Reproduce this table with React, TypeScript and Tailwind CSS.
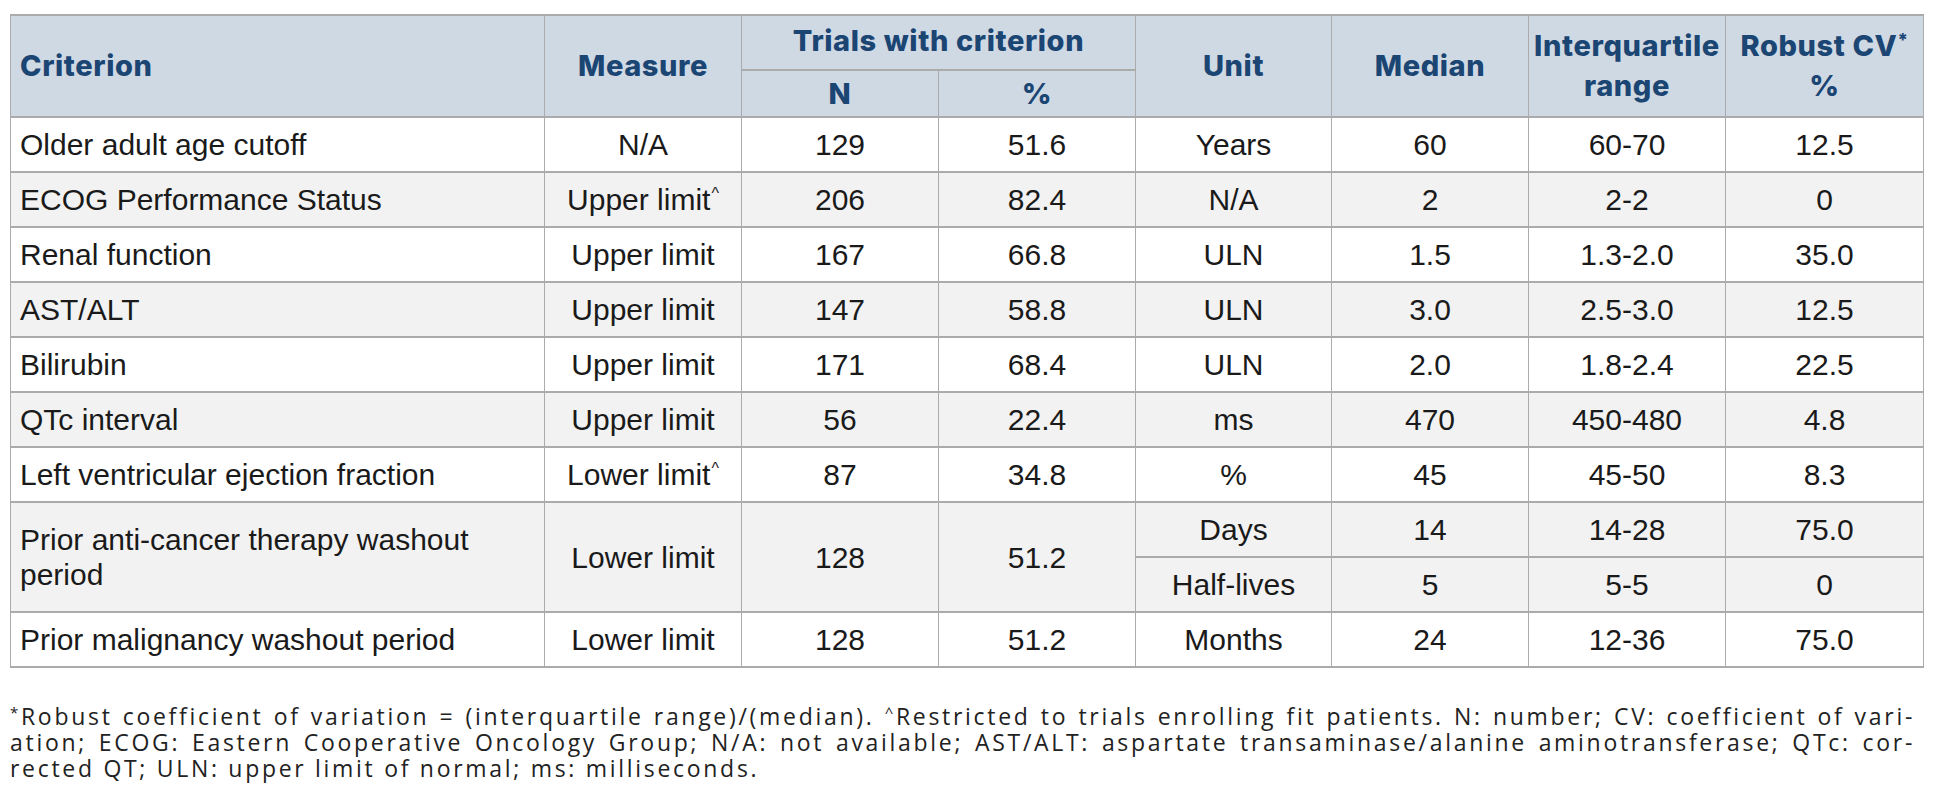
import React from "react";

const Caret = () => <sup className="text-[16px] relative -top-[11px] ml-[1px]">^</sup>;

const rows: { c: string; m: React.ReactNode; n: string; p: string; u: string; med: string; iqr: string; cv: string }[] = [
  { c: "Older adult age cutoff", m: "N/A", n: "129", p: "51.6", u: "Years", med: "60", iqr: "60-70", cv: "12.5" },
  { c: "ECOG Performance Status", m: <>Upper limit<Caret /></>, n: "206", p: "82.4", u: "N/A", med: "2", iqr: "2-2", cv: "0" },
  { c: "Renal function", m: "Upper limit", n: "167", p: "66.8", u: "ULN", med: "1.5", iqr: "1.3-2.0", cv: "35.0" },
  { c: "AST/ALT", m: "Upper limit", n: "147", p: "58.8", u: "ULN", med: "3.0", iqr: "2.5-3.0", cv: "12.5" },
  { c: "Bilirubin", m: "Upper limit", n: "171", p: "68.4", u: "ULN", med: "2.0", iqr: "1.8-2.4", cv: "22.5" },
  { c: "QTc interval", m: "Upper limit", n: "56", p: "22.4", u: "ms", med: "470", iqr: "450-480", cv: "4.8" },
  { c: "Left ventricular ejection fraction", m: <>Lower limit<Caret /></>, n: "87", p: "34.8", u: "%", med: "45", iqr: "45-50", cv: "8.3" },
];

const td = "border-x border-y-2 border-[#ababab] text-center align-middle p-0";
const th = "border-x border-y-2 border-[#ababab] text-center align-middle p-0 font-extrabold";

export default function App() {
  return (
    <div className="w-[1936px] h-[812px] bg-white overflow-hidden pt-[14px] pl-[10px]">
      <table
        className="table-fixed border-collapse w-[1913px] text-[30px] text-[#1a1a1a]"
        style={{ fontFamily: '"Liberation Sans", Arial, sans-serif' }}
      >
        <colgroup>
          <col className="w-[534px]" />
          <col className="w-[197px]" />
          <col className="w-[197px]" />
          <col className="w-[197px]" />
          <col className="w-[196px]" />
          <col className="w-[197px]" />
          <col className="w-[197px]" />
          <col className="w-[198px]" />
        </colgroup>
        <thead
          className="bg-[#cfd9e3] text-[#1b4573] text-[29px] leading-[40px] tracking-[0.6px]"
          style={{ fontFamily: 'Inter, "Liberation Sans", sans-serif' }}
        >
          <tr className="h-[55px]">
            <th rowSpan={2} className={th + " text-left pl-[9px]"}>Criterion</th>
            <th rowSpan={2} className={th}>Measure</th>
            <th colSpan={2} className={th + " pb-[4px]"}>Trials with criterion</th>
            <th rowSpan={2} className={th}>Unit</th>
            <th rowSpan={2} className={th}>Median</th>
            <th rowSpan={2} className={th + " whitespace-nowrap"}>Interquartile<br />range</th>
            <th rowSpan={2} className={th}>Robust CV<sup className="text-[18px] relative -top-[10px]">*</sup><br />%</th>
          </tr>
          <tr className="h-[47px]">
            <th className={th}>N</th>
            <th className={th}>%</th>
          </tr>
        </thead>
        <tbody>
          {rows.map((r, i) => (
            <tr key={i} className={"h-[55px] " + (i % 2 === 1 ? "bg-[#f2f2f2]" : "bg-white")}>
              <td className={td + " text-left pl-[9px]"}>{r.c}</td>
              <td className={td}>{r.m}</td>
              <td className={td}>{r.n}</td>
              <td className={td}>{r.p}</td>
              <td className={td}>{r.u}</td>
              <td className={td}>{r.med}</td>
              <td className={td}>{r.iqr}</td>
              <td className={td}>{r.cv}</td>
            </tr>
          ))}
          <tr className="h-[55px] bg-[#f2f2f2]">
            <td rowSpan={2} className={td + " text-left pl-[9px] leading-[35px]"}>Prior anti-cancer therapy washout period</td>
            <td rowSpan={2} className={td}>Lower limit</td>
            <td rowSpan={2} className={td}>128</td>
            <td rowSpan={2} className={td}>51.2</td>
            <td className={td}>Days</td>
            <td className={td}>14</td>
            <td className={td}>14-28</td>
            <td className={td}>75.0</td>
          </tr>
          <tr className="h-[55px] bg-[#f2f2f2]">
            <td className={td}>Half-lives</td>
            <td className={td}>5</td>
            <td className={td}>5-5</td>
            <td className={td}>0</td>
          </tr>
          <tr className="h-[55px] bg-white">
            <td className={td + " text-left pl-[9px]"}>Prior malignancy washout period</td>
            <td className={td}>Lower limit</td>
            <td className={td}>128</td>
            <td className={td}>51.2</td>
            <td className={td}>Months</td>
            <td className={td}>24</td>
            <td className={td}>12-36</td>
            <td className={td}>75.0</td>
          </tr>
        </tbody>
      </table>
      <div
        className="mt-[35px] w-[1905px] text-[23px] leading-[26px] tracking-[2.7px] text-[#222]"
        style={{ fontFamily: '"Open Sans", sans-serif' }}
      >
        <div className="[text-align-last:justify] text-justify whitespace-nowrap">
          <sup className="text-[15px] relative -top-[7px]">*</sup>Robust coefficient of variation = (interquartile range)/(median). <sup className="text-[15px] relative -top-[7px]">^</sup>Restricted to trials enrolling fit patients. N: number; CV: coefficient of vari-
        </div>
        <div className="[text-align-last:justify] text-justify whitespace-nowrap">
          ation; ECOG: Eastern Cooperative Oncology Group; N/A: not available; AST/ALT: aspartate transaminase/alanine aminotransferase; QTc: cor-
        </div>
        <div>rected QT; ULN: upper limit of normal; ms: milliseconds.</div>
      </div>
    </div>
  );
}
